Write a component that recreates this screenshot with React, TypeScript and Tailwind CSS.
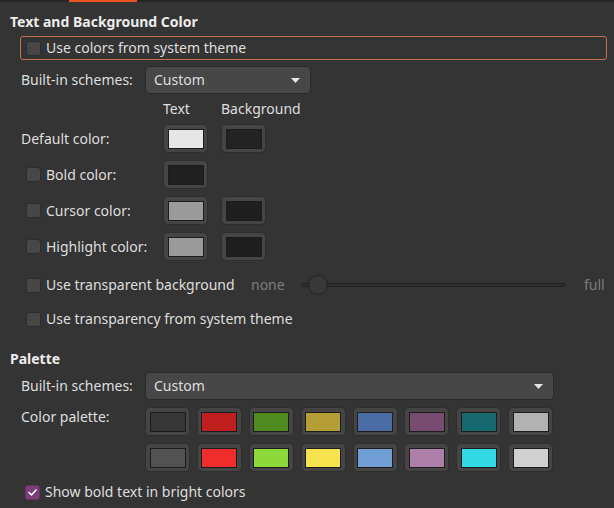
import React from 'react'

const paletteDim = ['#363636', '#c01f1f', '#4e8a1f', '#b59e36', '#4a6da5', '#774c70', '#16696e', '#b2b2b2']
const paletteBright = ['#525252', '#ef2d2d', '#8dd93a', '#f6e34d', '#729ed6', '#ae7fa8', '#33d9e4', '#d0d0d0']

function CheckBox({ checked }: { checked?: boolean }) {
  if (checked) {
    return (
      <span className="w-[15px] h-[15px] shrink-0 rounded-[3px] bg-[#7a3e78] border border-[#6a3268] flex items-center justify-center">
        <svg width="11" height="11" viewBox="0 0 11 11">
          <path d="M2 5.5 L4.5 8 L9 3" fill="none" stroke="#ffffff" strokeWidth="1.6" strokeLinecap="round" strokeLinejoin="round" />
        </svg>
      </span>
    )
  }
  return <span className="w-[15px] h-[15px] shrink-0 rounded-[3px] bg-[#474747] border border-[#2c2c2c]" />
}

function Check({ label, checked }: { label: string; checked?: boolean }) {
  return (
    <label className="flex items-center gap-[5px]">
      <CheckBox checked={checked} />
      <span>{label}</span>
    </label>
  )
}

function Combo({ value, width }: { value: string; width: string }) {
  return (
    <div className={`${width} h-[28px] flex items-center justify-between pl-[8px] pr-[10px] bg-[#474747] border border-[#2a2a2a] rounded-[5px]`}>
      <span>{value}</span>
      <svg width="9" height="5" viewBox="0 0 9 5">
        <polygon points="0,0 9,0 4.5,5" fill="#e6e6e6" />
      </svg>
    </div>
  )
}

function Swatch({ color }: { color: string }) {
  return (
    <button className="w-[45px] h-[29px] shrink-0 flex items-center justify-center bg-[#454545] border border-[#2e2e2e] rounded-[5px]">
      <span className="w-[36px] h-[20px] border border-[#1c1c1c]" style={{ background: color }} />
    </button>
  )
}

function ColorRow({ label, check, text, bg }: { label: string; check?: boolean; text: string; bg?: string }) {
  return (
    <div className="flex items-center h-[29px]">
      <div className="w-[142px]">
        {check ? <div className="ml-[5px]"><Check label={label} /></div> : <span>{label}</span>}
      </div>
      <Swatch color={text} />
      {bg && <div className="ml-[13px]"><Swatch color={bg} /></div>}
    </div>
  )
}

export default function App() {
  return (
    <div className="min-h-screen w-[614px] bg-[#343434] text-[#dedede] text-[14px] leading-[20px] font-['Noto_Sans',sans-serif]">
      <div className="h-[2px] bg-[#262626]">
        <div className="ml-[69px] w-[68px] h-[2px] bg-[#e95420]" />
      </div>

      <h2 className="mt-[10px] pl-[10px] font-bold text-[#ececec]">Text and Background Color</h2>

      <div className="mt-[4px] ml-[20px] mr-[7px] h-[24px] flex items-center pl-[5px] border border-[#c0714f] rounded-[3px]">
        <Check label="Use colors from system theme" />
      </div>

      <div className="pl-[21px]">
        <div className="mt-[6px] flex items-center">
          <span className="w-[124px]">Built-in schemes:</span>
          <Combo value="Custom" width="w-[166px]" />
        </div>

        <div className="mt-[6px] flex h-[18px] items-center">
          <span className="ml-[142px] w-[58px]">Text</span>
          <span>Background</span>
        </div>

        <div className="mt-[6px] flex flex-col gap-[7px]">
          <ColorRow label="Default color:" text="#e6e6e6" bg="#232323" />
          <ColorRow label="Bold color:" check text="#202020" />
          <ColorRow label="Cursor color:" check text="#9b9b9b" bg="#1f1f1f" />
          <ColorRow label="Highlight color:" check text="#9b9b9b" bg="#1f1f1f" />
        </div>

        <div className="mt-[13px] h-[22px] flex items-center pl-[5px]">
          <div className="w-[225px]"><Check label="Use transparent background" /></div>
          <span className="w-[51px] text-[#7c7c7c]">none</span>
          <div className="relative w-[264px] h-[4px] bg-[#2e2e2e] border border-[#232323] rounded-full">
            <span className="absolute left-[5px] top-[-9px] w-[20px] h-[20px] rounded-full bg-[#393939] border border-[#232323]" />
          </div>
          <span className="ml-[18px] text-[#7c7c7c]">full</span>
        </div>

        <div className="mt-[12px] h-[22px] flex items-center pl-[5px]">
          <Check label="Use transparency from system theme" />
        </div>
      </div>

      <h2 className="mt-[19px] pl-[10px] font-bold text-[#ececec]">Palette</h2>

      <div className="pl-[21px]">
        <div className="mt-[3px] flex items-center">
          <span className="w-[124px]">Built-in schemes:</span>
          <Combo value="Custom" width="w-[409px]" />
        </div>

        <div className="mt-[7px] flex items-start">
          <span className="w-[124px]">Color palette:</span>
          <div className="grid grid-cols-8 gap-[7px] w-[408px]">
            {paletteDim.map((c) => <Swatch key={c} color={c} />)}
            {paletteBright.map((c) => <Swatch key={c} color={c} />)}
          </div>
        </div>

        <div className="mt-[9px] h-[22px] flex items-center pl-[4px]">
          <Check label="Show bold text in bright colors" checked />
        </div>
      </div>
    </div>
  )
}
